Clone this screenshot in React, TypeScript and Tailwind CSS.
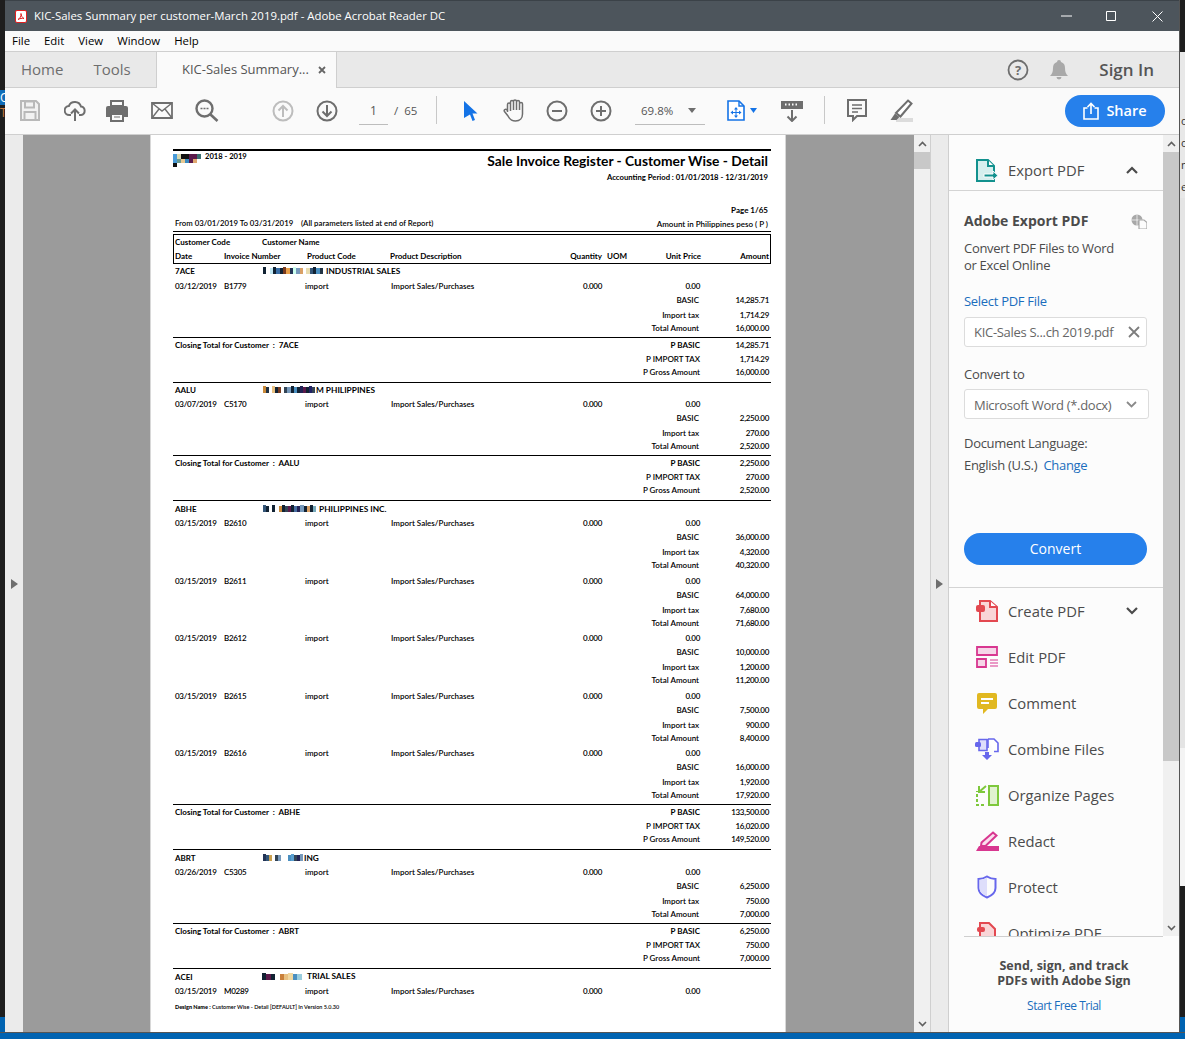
import type { ReactNode } from "react";

type Invoice = { date: string; no: string; basic: string; tax: string; total: string };
type Section = {
  code: string;
  cells: string[];
  mosaicWidth: number;
  nameGap: string;
  name: string;
  head: string;
  invoices: Invoice[];
  closing: [string, string, string];
};

const sections: Section[] = [
  {
    code: "7ACE",
    cells: ["#123", "#fff", "#bfe6f2", "#123", "#3a6ea5", "#123", "#7a3b1e", "#e8a04a", "#235", "#cfe", "#79b", "#d9a066", "#fff", "#e8dcb0", "#357", "#123", "#4a8fc0", "#234"],
    mosaicWidth: 60,
    nameGap: "ml-[3px]",
    name: "INDUSTRIAL SALES",
    head: "h-[15px] pb-[1px]",
    invoices: [{ date: "03/12/2019", no: "B1779", basic: "14,285.71", tax: "1,714.29", total: "16,000.00" }],
    closing: ["14,285.71", "1,714.29", "16,000.00"],
  },
  {
    code: "AALU",
    cells: ["#c98a3a", "#234", "#fff", "#e8c080", "#123", "#7a3b1e", "#fff", "#345", "#79b", "#123", "#4a8fc0", "#123", "#225", "#5b1a4a", "#123", "#226", "#345"],
    mosaicWidth: 52,
    nameGap: "ml-[1px]",
    name: "M PHILIPPINES",
    head: "h-[15px]",
    invoices: [{ date: "03/07/2019", no: "C5170", basic: "2,250.00", tax: "270.00", total: "2,520.00" }],
    closing: ["2,250.00", "270.00", "2,520.00"],
  },
  {
    code: "ABHE",
    cells: ["#357", "#123", "#fff", "#123", "#fff", "#c98a3a", "#123", "#345", "#5b1a4a", "#123", "#4a6fa0", "#225", "#79b", "#123", "#d9a066", "#123", "#7ab"],
    mosaicWidth: 53,
    nameGap: "ml-[3px]",
    name: "PHILIPPINES INC.",
    head: "h-[16px] pt-[1px]",
    invoices: [
      { date: "03/15/2019", no: "B2610", basic: "36,000.00", tax: "4,320.00", total: "40,320.00" },
      { date: "03/15/2019", no: "B2611", basic: "64,000.00", tax: "7,680.00", total: "71,680.00" },
      { date: "03/15/2019", no: "B2612", basic: "10,000.00", tax: "1,200.00", total: "11,200.00" },
      { date: "03/15/2019", no: "B2615", basic: "7,500.00", tax: "900.00", total: "8,400.00" },
      { date: "03/15/2019", no: "B2616", basic: "16,000.00", tax: "1,920.00", total: "17,920.00" },
    ],
    closing: ["133,500.00", "16,020.00", "149,520.00"],
  },
  {
    code: "ABRT",
    cells: ["#235", "#357", "#c9a050", "#fff", "#345", "#79b", "#fff", "#fff", "#4a8fc0", "#5a9fd0", "#345", "#225", "#79b"],
    mosaicWidth: 40,
    nameGap: "ml-[1px]",
    name: "ING",
    head: "h-[16px] pt-[1px]",
    invoices: [{ date: "03/26/2019", no: "C5305", basic: "6,250.00", tax: "750.00", total: "7,000.00" }],
    closing: ["6,250.00", "750.00", "7,000.00"],
  },
];

const num = "tracking-[-0.3px]";

function Mosaic({ cells, width }: { cells: string[]; width: number }) {
  const w = width / cells.length;
  return (
    <svg width={width} height={8} className="shrink-0" shapeRendering="crispEdges">
      {cells.map((c, i) => (
        <rect key={i} x={i * w} y={i % 3 === 0 ? 0 : 1} width={w} height={i % 3 === 0 ? 7 : 6} fill={c} />
      ))}
    </svg>
  );
}

function TopMosaic() {
  const top = ["#4a9bd8", "#d8d8b0", "#111", "#111", "#5b1a4a", "#5b1a4a", "#3a7070"];
  const bottom = ["#4a9bd8", "#6a9a90", "#e8c890", "#3a8ac0", "#5b1a4a", "#e0a870", "#ffffff"];
  return (
    <svg width={30} height={13} className="mt-[3px] shrink-0" shapeRendering="crispEdges">
      {top.map((c, i) => (
        <rect key={i} x={i * 4} y={0} width={4} height={5} fill={c} />
      ))}
      {bottom.map((c, i) => (
        <rect key={i} x={i * 4} y={5} width={4} height={4} fill={c} />
      ))}
      <rect x={0} y={9} width={4} height={4} fill="#111" />
    </svg>
  );
}

function InvoiceLine({ date, no }: { date: string; no: string }) {
  return (
    <div className="grid h-[14px] grid-cols-[49px_81px_86px_130px_81px_38px_60px_69px] items-center whitespace-nowrap px-[2px]">
      <span className={num}>{date}</span>
      <span className={num}>{no}</span>
      <span>import</span>
      <span>Import Sales/Purchases</span>
      <span className={`text-right ${num}`}>0.000</span>
      <span />
      <span className={`text-right ${num}`}>0.00</span>
      <span />
    </div>
  );
}

function AmountLine({ label, amount, h = "h-[14px]", inset = "" }: { label: string; amount: string; h?: string; inset?: string }) {
  return (
    <div className={`flex items-center justify-end px-[2px] ${h}`}>
      <span className={inset}>{label}</span>
      <span className={`w-[69px] text-right ${num}`}>{amount}</span>
    </div>
  );
}

function ReportSection({ s, first }: { s: Section; first?: boolean }) {
  return (
    <>
      <div className={`flex items-center text-[8.3px] font-bold ${s.head} ${first ? "" : "border-t border-black"}`}>
        <span className="w-[90px] pl-[2px] text-[8px]">{s.code}</span>
        <Mosaic cells={s.cells} width={s.mosaicWidth} />
        <span className={s.nameGap}>{s.name}</span>
      </div>
      {s.invoices.map((inv, i) => (
        <div key={inv.no} className={i === 0 ? "" : i % 2 === 1 ? "mt-[2px]" : "mt-[1px]"}>
          <InvoiceLine date={inv.date} no={inv.no} />
          <AmountLine label="BASIC" amount={inv.basic} inset="pr-px" />
          <AmountLine label="Import tax" amount={inv.tax} h="h-[15px]" inset="pr-px" />
          <AmountLine label="Total Amount" amount={inv.total} h="h-[13px] pb-[1px]" inset="pr-px" />
        </div>
      ))}
      <div className="mt-[2px] border-t border-black">
        <div className="flex h-[14px] items-center justify-between px-[2px]">
          <span className="font-bold">
            Closing Total for Customer&nbsp; :&nbsp; {s.code}
          </span>
          <span className="flex">
            <span className="font-bold">P BASIC</span>
            <span className={`w-[69px] text-right ${num}`}>{s.closing[0]}</span>
          </span>
        </div>
        <AmountLine label="P IMPORT TAX" amount={s.closing[1]} />
        <AmountLine label="P Gross Amount" amount={s.closing[2]} h="h-[13px] pb-[1px]" />
      </div>
      <div className="h-[3px]" />
    </>
  );
}

function ReportPage() {
  return (
    <div className="ml-[127px] h-full w-[636px] overflow-hidden border-x border-[#d8d8d8] bg-white pl-[22px] pt-[14px] font-['Lato',sans-serif] text-[8px] font-semibold leading-none text-black">
      <div className="w-[598px]">
        <div className="h-[2px] bg-black" />
        <div className="flex h-[39px] justify-between">
          <div className="flex h-[14px] items-start">
            <TopMosaic />
            <span className="pl-[2px] pt-[2px] text-[7.6px] font-bold">2018 - 2019</span>
          </div>
          <div className="pr-[3px] text-right">
            <div className="mt-[2px] text-[13.8px] font-bold leading-[16px]">
              Sale Invoice Register - Customer Wise - Detail
            </div>
            <div className="mt-[5px] text-[7.7px] font-bold">Accounting Period : 01/01/2018 - 12/31/2019</div>
          </div>
        </div>
        <div className="mt-[16px] h-[10px] pr-[3px] text-right font-bold">Page 1/65</div>
        <div className="mt-[3px] flex h-[10px] items-center justify-between pl-[2px] pr-[3px]">
          <span className="text-[7.8px]">From 03/01/2019 To 03/31/2019 &nbsp;&nbsp; (All parameters listed at end of Report)</span>
          <span>Amount in Philippines peso ( P )</span>
        </div>
        <div className="mt-[2px] h-px bg-black" />
        <div className="mt-[2px] border border-black font-bold">
          <div className="flex h-[14px] items-center pl-px">
            <span className="w-[87px]">Customer Code</span>
            <span>Customer Name</span>
          </div>
          <div className="grid h-[14px] grid-cols-[49px_83px_83px_131px_81px_38px_61px_68px] items-center pl-px pr-px">
            <span>Date</span>
            <span>Invoice Number</span>
            <span>Product Code</span>
            <span>Product Description</span>
            <span className="text-right">Quantity</span>
            <span className="pl-[5px]">UOM</span>
            <span className="text-right">Unit Price</span>
            <span className="text-right">Amount</span>
          </div>
        </div>
        {sections.map((s, i) => (
          <ReportSection key={s.code} s={s} first={i === 0} />
        ))}
        <div className="flex h-[16px] items-center border-t border-black text-[8.3px] font-bold">
          <span className="w-[89px] pl-[2px] text-[8px]">ACEI</span>
          <Mosaic cells={["#123", "#5b1a4a", "#123", "#fff", "#c9803a", "#e8c080", "#f0d8a0", "#4a8fc0", "#9cd", "#fff"]} width={44} />
          <span className="ml-[1px]">TRIAL SALES</span>
        </div>
        <InvoiceLine date="03/15/2019" no="M0289" />
        <div className="mt-[7px] px-[2px] text-[5.5px]">
          <b>Design Name :</b> Customer Wise - Detail [DEFAULT] In Version 5.0.30
        </div>
      </div>
    </div>
  );
}

function Ico({ w = 24, h = 24, box = "0 0 24 24", children }: { w?: number; h?: number; box?: string; children: ReactNode }) {
  return (
    <svg width={w} height={h} viewBox={box} fill="none" className="shrink-0">
      {children}
    </svg>
  );
}

function CircleIcon({ color, children }: { color: string; children: ReactNode }) {
  return (
    <Ico w={22} h={22} box="0 0 22 22">
      <circle cx="11" cy="11" r="9.500" stroke={color} strokeWidth="2" />
      <g stroke={color} strokeWidth="2">{children}</g>
    </Ico>
  );
}

function Toolbar() {
  const g = "#6e6e6e";
  return (
    <div className="flex h-[47px] items-center border-b border-[#cfcfcf] bg-[#fafafa] pl-[14px] pb-[1px]">
      <div className="ml-px w-[44px]">
        <Ico w={20} h={21} box="0 0 20 21">
          <path d="M1 1h15l3 3v16H1z" stroke="#b9b9b9" strokeWidth="2" fill="#f2f2f2" />
          <path d="M5 1.500h9v6H5zM4.500 12h11v8h-11z" stroke="#b9b9b9" strokeWidth="2" />
        </Ico>
      </div>
      <div className="w-[42px]">
        <Ico w={22} h={22} box="0 0 22 22">
          <path d="M7 15H5.500a4.500 4.500 0 0 1-.6-9A6.500 6.500 0 0 1 17 6.500 4.300 4.300 0 0 1 17 15h-2" stroke={g} strokeWidth="2" />
          <path d="M11 21V10M7 13.500l4-4 4 4" stroke={g} strokeWidth="2" />
        </Ico>
      </div>
      <div className="w-[45px]">
        <Ico w={22} h={22} box="0 0 22 22">
          <path d="M5 1h12v5H5z" stroke={g} strokeWidth="2" />
          <path d="M2 6h18a2 2 0 0 1 2 2v9h-4v-4H4v4H0V8a2 2 0 0 1 2-2z" fill={g} />
          <path d="M5 14h12v7H5z" stroke={g} strokeWidth="2" />
          <path d="M8 17h6" stroke={g} />
        </Ico>
      </div>
      <div className="w-[44px]">
        <Ico w={22} h={17} box="0 0 22 17">
          <path d="M1 1h20v15H1z" stroke={g} strokeWidth="1.800" />
          <path d="M1 1l10 8 10-8M1 16l7-9M21 16l-7-9" stroke={g} strokeWidth="1.400" />
        </Ico>
      </div>
      <div className="w-[77px]">
        <Ico w={24} h={23} box="0 0 24 23">
          <circle cx="9.500" cy="9.500" r="8" stroke={g} strokeWidth="2.400" />
          <path d="M15.500 15.500l7 6.500" stroke={g} strokeWidth="2.600" />
          <path d="M5.500 9.500h2M8.500 9.500h2M11.500 9.500h2" stroke={g} strokeWidth="1.500" />
        </Ico>
      </div>
      <div className="w-[44px]">
        <CircleIcon color="#bdbdbd">
          <path d="M11 17V6M6.500 10.500L11 6l4.500 4.500" />
        </CircleIcon>
      </div>
      <div className="w-[43px]">
        <CircleIcon color={g}>
          <path d="M11 5v11M6.500 11.500L11 16l4.500-4.500" />
        </CircleIcon>
      </div>
      <div className="flex h-[28px] w-[29px] items-center justify-center border-b border-[#bdbdbd] pt-[1px] font-['Open_Sans',sans-serif] text-[12px] text-[#555]">
        1
      </div>
      <span className="ml-[6px] w-[42px] whitespace-nowrap font-['Open_Sans',sans-serif] text-[11.5px] text-[#555]">/&nbsp; 65</span>
      <div className="mb-px h-[28px] w-px bg-[#c8c8c8]" />
      <div className="ml-[27px] w-[39px]">
        <Ico w={14} h={20} box="0 0 14 20">
          <path d="M0 0l13.500 12.500H8.500l2.500 6.500-2.500 1-2.500-6.500L0 17z" fill="#1473e6" />
        </Ico>
      </div>
      <div className="w-[43px]">
        <Ico w={22} h={23} box="0 0 22 23">
          <path d="M4.500 13V5.500a1.500 1.500 0 0 1 3 0V3a1.500 1.500 0 0 1 3 0v-.5a1.500 1.500 0 0 1 3 0V3a1.500 1.500 0 0 1 3 0v.5M16.500 5a1.500 1.500 0 0 1 3 0v10c0 4-2.500 7-7 7-4 0-6-2-7.500-5L1.500 12.500c-1-1.500 1-3 2.500-1.500l1 1M7.500 5v7M10.500 3v8M13.500 3v8M16.500 3.500V11" stroke={g} strokeWidth="1.500" />
        </Ico>
      </div>
      <div className="w-[44px]">
        <CircleIcon color={g}>
          <path d="M6 11h10" />
        </CircleIcon>
      </div>
      <div className="w-[45px]">
        <CircleIcon color={g}>
          <path d="M6 11h10M11 6v10" />
        </CircleIcon>
      </div>
      <div className="flex h-[28px] w-[70px] items-center border-b border-[#bdbdbd] pl-[6px] pt-[1px] font-['Open_Sans',sans-serif] text-[11.500px] text-[#555]">
        <span className="w-[47px]">69.8%</span>
        <svg width="8" height="5" viewBox="0 0 8 5">
          <path d="M0 0h8L4 5z" fill={g} />
        </svg>
      </div>
      <div className="ml-[22px] flex w-[53px] items-center gap-[5px]">
        <Ico w={18} h={21} box="0 0 18 21">
          <path d="M1 1h11l5 5v14H1z" stroke="#1473e6" strokeWidth="1.600" fill="#fff" />
          <path d="M12 1v5h5" stroke="#1473e6" strokeWidth="1.400" />
          <path d="M9 7l2 2.500H7zM9 18l-2-2.500h4zM3.500 12.500l2.500-2v4zM14.500 12.500l-2.500-2v4z" fill="#1473e6" />
          <path d="M9 9v7M5 12.500h8" stroke="#1473e6" />
        </Ico>
        <svg width="7" height="5" viewBox="0 0 7 5">
          <path d="M0 0h7L3.500 5z" fill="#1473e6" />
        </svg>
      </div>
      <div className="w-[44px]">
        <Ico w={24} h={22} box="0 0 24 22">
          <path d="M1 1h22v8H1z" fill="#6e6e6e" />
          <path d="M5 4.500h1.500M8.500 4.500H10M12 4.500h1.500M15.500 4.500H17" stroke="#fff" strokeWidth="2" />
          <path d="M12 10v11M7.500 16.500L12 21l4.500-4.500" stroke={g} strokeWidth="2" />
        </Ico>
      </div>
      <div className="mb-px h-[28px] w-px bg-[#c8c8c8]" />
      <div className="ml-[22px] w-[42px]">
        <Ico w={20} h={23} box="0 0 20 23">
          <path d="M1 1h18v16h-9l-4 4v-4H1z" stroke={g} strokeWidth="2" />
          <path d="M5 6h10M5 9.500h10M5 13h6" stroke={g} strokeWidth="1.500" />
        </Ico>
      </div>
      <div className="w-[176px]">
        <Ico w={24} h={23} box="0 0 24 23">
          <path d="M7 19h17v4H7z" fill="#dcdcdc" />
          <path d="M19 1.500l3.500 3-11 13-4.500-3.500z" stroke={g} strokeWidth="2" fill="#fff" />
          <path d="M6 14.500l4.500 3.500-3 3H1.500z" fill={g} />
        </Ico>
      </div>
      <div className="flex h-[32px] w-[100px] items-center justify-center gap-[7px] rounded-full bg-[#2680eb] font-['Open_Sans',sans-serif] text-[14.500px] font-semibold text-white">
        <Ico w={16} h={18} box="0 0 16 18">
          <path d="M4.500 6H1v11h14V6h-3.500" stroke="#fff" strokeWidth="1.600" />
          <path d="M8 12V1.500M4.500 5L8 1.500 11.500 5" stroke="#fff" strokeWidth="1.600" />
        </Ico>
        Share
      </div>
    </div>
  );
}

function ScrollArrow({ down, className = "" }: { down?: boolean; className?: string }) {
  return (
    <svg width="9" height="6" viewBox="0 0 9 6" className={className}>
      <path d={down ? "M1 1l3.500 3.500L8 1" : "M1 5l3.500-3.500L8 5"} stroke="#606060" strokeWidth="1.600" fill="none" />
    </svg>
  );
}

const toolRows: { label: string; icon: ReactNode; chevron?: boolean }[] = [
  {
    label: "Create PDF",
    chevron: true,
    icon: (
      <Ico w={22} h={22} box="0 0 22 22">
        <path d="M4 1h10l7 6v14H4z" fill="#f9d5d7" stroke="#e34850" strokeWidth="2" />
        <path d="M14 1v6h7" stroke="#e34850" strokeWidth="2" fill="#fff" />
        <rect x="0" y="5" width="9" height="7" rx="2" fill="#e34850" />
      </Ico>
    ),
  },
  {
    label: "Edit PDF",
    icon: (
      <Ico w={22} h={22} box="0 0 22 22">
        <path d="M1 1h20v8H1z" fill="#f6d6e8" stroke="#d83790" strokeWidth="1.800" />
        <path d="M1 13h9v8H1z" fill="#f6d6e8" stroke="#d83790" strokeWidth="1.800" />
        <path d="M14 14h8M14 17h8M14 20h8" stroke="#d83790" strokeWidth="1.200" />
      </Ico>
    ),
  },
  {
    label: "Comment",
    icon: (
      <Ico w={20} h={21} box="0 0 20 21">
        <path d="M2 0h16a2 2 0 0 1 2 2v12a2 2 0 0 1-2 2H11l-5 5v-5H2a2 2 0 0 1-2-2V2a2 2 0 0 1 2-2z" fill="#e1b821" />
        <path d="M4 6h12M4 10h8" stroke="#fff" strokeWidth="2" />
      </Ico>
    ),
  },
  {
    label: "Combine Files",
    icon: (
      <Ico w={24} h={23} box="0 0 24 23">
        <path d="M4 1.500h8v11H4z" fill="#dedefb" stroke="#6767ec" strokeWidth="1.600" />
        <path d="M13 1h6l4 4v8.500h-4" fill="#fff" stroke="#6767ec" strokeWidth="1.600" />
        <path d="M13 1v9" stroke="#6767ec" strokeWidth="1.600" />
        <rect x="0" y="4" width="6" height="5" rx="1.500" fill="#6767ec" />
        <path d="M10 14h4v3h3l-5 5-5-5h3z" fill="#6767ec" />
      </Ico>
    ),
  },
  {
    label: "Organize Pages",
    icon: (
      <Ico w={23} h={21} box="0 0 23 21">
        <path d="M13 1h9v19h-9z" fill="#e1f2d0" stroke="#7ec83c" strokeWidth="2" />
        <path d="M1 9v11h9M1 6v1" stroke="#7ec83c" strokeWidth="2" strokeDasharray="3 2" />
        <path d="M3 1v6h6M3 7l7-6" stroke="#7ec83c" strokeWidth="2" />
      </Ico>
    ),
  },
  {
    label: "Redact",
    icon: (
      <Ico w={23} h={20} box="0 0 23 20">
        <path d="M17 1.500l3.500 3-11 10.500H5l.5-3.500z" fill="#fbe0ee" stroke="#d83790" strokeWidth="2" />
        <path d="M3 15h20v5H0z" fill="#d83790" />
      </Ico>
    ),
  },
  {
    label: "Protect",
    icon: (
      <Ico w={20} h={24} box="0 0 20 24">
        <path d="M10 1.500c3 2 5.500 2.500 8.500 2.500v9c0 4.500-3.500 7.500-8.500 9.500C5 20.500 1.500 17.500 1.500 13V4c3 0 5.500-.5 8.500-2.500z" stroke="#6767ec" strokeWidth="2" />
        <path d="M10 2.500C7.500 4 5 4.800 2.500 5v8c0 4 3.200 6.500 7.500 8.300z" fill="#dedefb" />
      </Ico>
    ),
  },
  {
    label: "Optimize PDF",
    icon: (
      <Ico w={20} h={22} box="0 0 20 22">
        <path d="M3 1h9l6 6v14H3z" fill="#f9d5d7" stroke="#e34850" strokeWidth="2" />
        <rect x="0" y="5" width="8" height="5" rx="2" fill="#e34850" />
      </Ico>
    ),
  },
];

function ToolsPanel() {
  const link = "text-[#1a6dbd]";
  return (
    <div className="flex min-h-0 w-[231px] flex-col border-l border-[#cfcfcf] bg-[#fcfcfc] font-['Open_Sans',sans-serif] text-[13px] leading-[18px] tracking-[-0.3px] text-[#4b4b4b]">
      <div className="flex h-[801px] min-h-0">
        <div className="w-[214px] overflow-hidden pt-[15px]">
          <div className="flex h-[40px] items-center pl-[27px] pr-[25px] tracking-normal">
            <Ico w={22} h={23} box="0 0 22 23">
              <path d="M1 1h11l6 6v15H1z" fill="#d6efee" stroke="#12918e" strokeWidth="2" />
              <path d="M12 1v6h6" stroke="#12918e" strokeWidth="2" fill="#fff" />
              <path d="M8 15h9v-3l5 4.500-5 4.500v-3H8z" fill="#12918e" stroke="#fcfcfc" strokeWidth="1" />
            </Ico>
            <span className="ml-[10px] flex-1 text-[14.800px]">Export PDF</span>
            <svg width="12" height="8" viewBox="0 0 12 8">
              <path d="M1 7l5-5 5 5" stroke="#4b4b4b" strokeWidth="2.200" fill="none" />
            </svg>
          </div>
          <div className="h-px bg-[#d4d4d4]" />
          <div className="pl-[15px] pr-[16px]">
            <div className="mt-[20px] flex h-[20px] items-center justify-between">
              <span className="text-[14px] font-bold tracking-normal">Adobe Export PDF</span>
              <svg width="16" height="15" viewBox="0 0 16 15">
                <circle cx="6" cy="6" r="5.500" fill="#a8a8a8" />
                <path d="M6 .5v11M.5 6h11" stroke="#fff" strokeWidth=".7" />
                <path d="M8 6h5l3 2.500V15H8z" fill="#fcfcfc" stroke="#a8a8a8" strokeWidth="1.200" />
              </svg>
            </div>
            <div className="mt-[9px] leading-[17px]">
              Convert PDF Files to Word
              <br />
              or Excel Online
            </div>
            <div className={`mt-[18px] h-[18px] ${link}`}>Select PDF File</div>
            <div className="mt-[7px] flex h-[30px] items-center justify-between rounded-[3px] border border-[#dcdcdc] bg-white pl-[9px] pr-[6px] text-[#666]">
              <span className="whitespace-nowrap">KIC-Sales S...ch 2019.pdf</span>
              <svg width="12" height="12" viewBox="0 0 12 12">
                <path d="M1 1l10 10M11 1L1 11" stroke="#7d7d7d" strokeWidth="1.800" />
              </svg>
            </div>
            <div className="mt-[18px] h-[18px]">Convert to</div>
            <div className="mt-[6px] flex h-[30px] w-[185px] items-center justify-between rounded-[3px] border border-[#dcdcdc] bg-white pl-[9px] pr-[11px] pt-[1px] text-[#666]">
              <span className="whitespace-nowrap">Microsoft Word (*.docx)</span>
              <svg width="11" height="7" viewBox="0 0 11 7">
                <path d="M1 1l4.500 4.500L10 1" stroke="#8a8a8a" strokeWidth="1.800" fill="none" />
              </svg>
            </div>
            <div className="mt-[15px] h-[18px]">Document Language:</div>
            <div className="mt-[4px] h-[18px]">
              English (U.S.) &nbsp;<span className={link}>Change</span>
            </div>
            <div className="mt-[59px] flex h-[32px] items-center justify-center rounded-full bg-[#2680eb] text-[14px] tracking-normal text-white">
              Convert
            </div>
          </div>
          <div className="mt-[22px] h-px bg-[#d4d4d4]" />
          {toolRows.map((row) => (
            <div key={row.label} className="flex h-[46px] items-center pl-[26px] pr-[25px] text-[14.800px] tracking-normal">
              <div className="flex w-[24px] justify-center">{row.icon}</div>
              <span className="ml-[9px] flex-1">{row.label}</span>
              {row.chevron && (
                <svg width="12" height="8" viewBox="0 0 12 8">
                  <path d="M1 1l5 5 5-5" stroke="#4b4b4b" strokeWidth="2.200" fill="none" />
                </svg>
              )}
            </div>
          ))}
        </div>
        <div className="flex w-[16px] flex-col items-center bg-[#f0f0f0]">
          <div className="flex h-[17px] items-center">
            <ScrollArrow />
          </div>
          <div className="h-[609px] w-full bg-[#c8c8c8]" />
          <div className="flex-1" />
          <div className="flex h-[17px] items-center">
            <ScrollArrow down />
          </div>
        </div>
      </div>
      <div className="ml-[15px] h-px w-[199px] bg-[#cfcfcf]" />
      <div className="flex-1 pt-[21px] text-center text-[12.500px] font-bold leading-[15px] tracking-normal">
        Send, sign, and track
        <br />
        PDFs with Adobe Sign
        <div className={`mt-[10px] text-[12px] font-normal tracking-[-0.5px] ${link}`}>Start Free Trial</div>
      </div>
    </div>
  );
}

export default function App() {
  return (
    <div className="flex h-[1039px] w-[1185px] flex-col overflow-hidden bg-[#1e1e1e]">
      <div className="flex h-[1032px]">
        <div className="flex w-[5px] flex-col font-['Open_Sans',sans-serif] text-[12px] leading-[15px] text-[#ccc]">
          <div className="h-[90px]" />
          <div className="h-[15px] overflow-hidden bg-[#0f6cb8] text-white">O</div>
          <div className="h-[15px] overflow-hidden text-[#c9793f]">T</div>
          <div className="flex-1" />
          <div className="h-[15px] bg-[#0063b1]" />
        </div>
        <div className="flex w-[1174px] flex-col bg-[#fafafa]">
          <div className="flex h-[31px] items-center border-t border-[#3b4248] bg-[#4d555c] pl-[10px] font-['Open_Sans',sans-serif] text-[11.400px] text-white">
            <svg width="12" height="13" viewBox="0 0 12 13">
              <rect x=".5" y=".5" width="11" height="12" rx="1.500" fill="#fff" stroke="#e02020" />
              <path d="M3 9.500c2-1 3.500-3.500 3-6 0 2 1 4 3 5-2-.5-4 0-6 1z" stroke="#e02020" fill="none" />
            </svg>
            <span className="ml-[7px] flex-1 whitespace-nowrap">KIC-Sales Summary per customer-March 2019.pdf - Adobe Acrobat Reader DC</span>
            <svg width="11" height="2" viewBox="0 0 11 2" className="mr-[34px]">
              <path d="M0 1h11" stroke="#fff" />
            </svg>
            <svg width="11" height="11" viewBox="0 0 11 11" className="mr-[35px]">
              <path d="M.5.5h9v9h-9z" stroke="#fff" fill="none" />
            </svg>
            <svg width="11" height="11" viewBox="0 0 11 11" className="mr-[16px]">
              <path d="M.5.5l10 10M10.500.5l-10 10" stroke="#fff" />
            </svg>
          </div>
          <div className="flex h-[21px] items-center gap-[14px] border-b border-[#cfcfcf] bg-[#fafafa] pl-[7px] font-['Open_Sans',sans-serif] text-[11.400px] text-black">
            <span>File</span>
            <span>Edit</span>
            <span>View</span>
            <span>Window</span>
            <span>Help</span>
          </div>
          <div className="flex h-[36px] items-stretch border-b border-[#cfcfcf] bg-[#e9e9e9] font-['Open_Sans',sans-serif] text-[#6e6e6e]">
            <div className="flex w-[151px] items-center gap-[30px] pl-[16px] text-[15px]">
              <span>Home</span>
              <span>Tools</span>
            </div>
            <div className="mb-[-1px] flex w-[181px] items-center border-x border-[#cfcfcf] bg-[#fafafa] pl-[25px] text-[13px] text-[#555]">
              <span className="whitespace-nowrap">KIC-Sales Summary...</span>
              <svg width="8" height="8" viewBox="0 0 8 8" className="ml-[9px]">
                <path d="M1 1l6 6M7 1L1 7" stroke="#666" strokeWidth="1.800" />
              </svg>
            </div>
            <div className="flex flex-1 items-center justify-end pr-[25px]">
              <svg width="22" height="22" viewBox="0 0 22 22" className="mr-[21px]">
                <circle cx="11" cy="11" r="9.500" stroke="#6e6e6e" strokeWidth="1.800" fill="none" />
                <text x="11" y="15.500" textAnchor="middle" fontSize="13" fontWeight="700" fill="#6e6e6e" fontFamily="Open Sans">?</text>
              </svg>
              <svg width="18" height="20" viewBox="0 0 18 20" className="mr-[31px]">
                <path d="M9 0a2 2 0 0 1 2 2c3 1 4 3 4 6 0 4 1 6 3 8H0c2-2 3-4 3-8 0-3 1-5 4-6a2 2 0 0 1 2-2zM6.500 17h5a2.500 2.500 0 0 1-5 0z" fill="#a9a9a9" />
              </svg>
              <span className="text-[17px] font-semibold text-[#555]">Sign In</span>
            </div>
          </div>
          <Toolbar />
          <div className="flex min-h-0 flex-1">
            <div className="flex w-[18px] items-center justify-center bg-[#ebebeb]">
              <svg width="7" height="10" viewBox="0 0 7 10">
                <path d="M0 0l7 5-7 5z" fill="#6e6e6e" />
              </svg>
            </div>
            <div className="min-h-0 w-[891px] bg-[#9b9b9b]">
              <ReportPage />
            </div>
            <div className="flex w-[17px] flex-col items-center border-r border-[#cfcfcf] bg-[#f0f0f0]">
              <div className="flex h-[17px] items-center">
                <ScrollArrow />
              </div>
              <div className="h-[17px] w-full bg-[#c8c8c8]" />
              <div className="flex-1" />
              <div className="flex h-[17px] items-center">
                <ScrollArrow down />
              </div>
            </div>
            <div className="flex w-[17px] items-center justify-center bg-[#ebebeb]">
              <svg width="7" height="10" viewBox="0 0 7 10">
                <path d="M0 0l7 5-7 5z" fill="#6e6e6e" />
              </svg>
            </div>
            <ToolsPanel />
          </div>
        </div>
        <div className="flex flex-1 flex-col border-l border-[#555] font-['Open_Sans',sans-serif] text-[11px] leading-[22px] text-[#333]">
          <div className="h-[52px]" />
          <div className="h-[58px] bg-[#e8e8e8]" />
          <div className="overflow-hidden bg-[#e8e8e8] pl-px">
            <div className="h-[22px]">o</div>
            <div className="h-[22px]">o</div>
            <div className="h-[22px]">n</div>
            <div className="h-[22px]">e</div>
          </div>
          <div className="h-[550px] bg-[#e4e4e4]" />
          <div className="h-[138px] bg-[#f4f4f4]" />
          <div className="flex-1" />
          <div className="h-[15px] bg-[#0063b1]" />
        </div>
      </div>
      <div className="h-[7px] border-t border-[#555] bg-[#0063b1]" />
    </div>
  );
}
